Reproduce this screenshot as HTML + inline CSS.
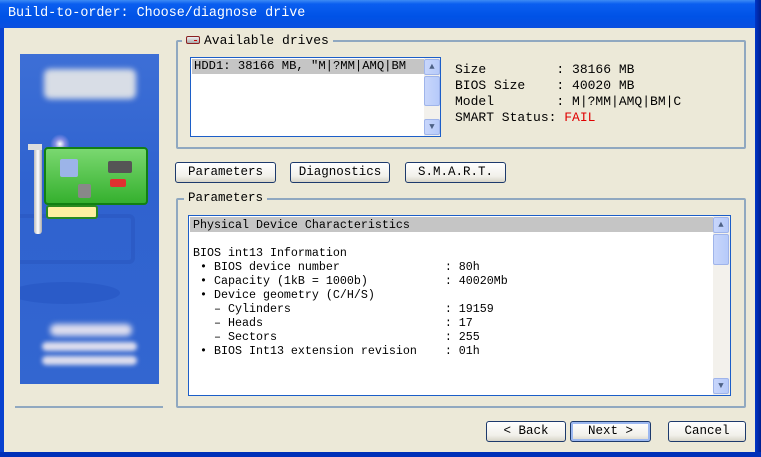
<!DOCTYPE html>
<html><head><style>
*{margin:0;padding:0;box-sizing:border-box}
body{width:761px;height:457px;overflow:hidden;background:#0842d0;font-family:"Liberation Mono",monospace;font-size:11.67px;position:relative}
.a{position:absolute}
.title{left:0;top:0;width:761px;height:28px;background:linear-gradient(#3d8bf5 0,#0a5ef0 4px,#0052e6 60%,#0a4fe0);}
.title span{position:absolute;left:8px;top:6px;color:#fff;font-size:13.4px}
.client{left:4px;top:28px;width:751px;height:424px;background:#ece9d8}
.rb{left:755px;top:0;width:6px;height:457px;background:linear-gradient(90deg,#0036c8,#001e8f)}
.bb{left:0;top:452px;width:761px;height:5px;background:#0030b8}
.grp{border:2px solid #90a8c0;border-radius:2px}
.lbl{background:#ece9d8;padding:0 4px;line-height:14px}
.list{background:#fff;border:1px solid #1c5ec8}
.sel{background:#c5c5c5}
.btn{border:1px solid #1d3a6c;border-radius:3px;background:linear-gradient(#fff,#f1f0ea 70%,#d8d5c8);text-align:center;line-height:18px;font-size:12px}
.sb{background:#f3f1ec}
.sbb{background:linear-gradient(90deg,#c8d6fb,#b6cafa);border:1px solid #9fb4ea;border-radius:2px}
pre{font-family:"Liberation Mono",monospace;font-size:11.67px;line-height:14px}
</style></head><body>
<div class="a title"><span>Build-to-order: Choose/diagnose drive</span></div>
<div class="a client"></div>
<div class="a rb"></div><div class="a bb"></div>

<!-- image panel -->
<div class="a" style="left:20px;top:54px;width:139px;height:330px;background:linear-gradient(180deg,#3d6fd6,#2f62cf 40%,#3366d0);overflow:hidden">
 <div class="a" style="left:24px;top:15px;width:92px;height:30px;background:#d8dde6;border-radius:6px;filter:blur(3px)"></div>
 <div class="a" style="left:-10px;top:160px;width:125px;height:50px;border:4px solid #2a56c0;border-radius:6px;opacity:.6"></div>
 <div class="a" style="left:-10px;top:228px;width:110px;height:22px;border-radius:50%;background:#2857c4;opacity:.7"></div>
 <div class="a" style="left:26px;top:151px;width:52px;height:14px;background:#fff0a0;border:2px solid #2a8a20;border-radius:3px"></div>
 <div class="a" style="left:14px;top:92px;width:8px;height:88px;background:linear-gradient(90deg,#bbb,#fff,#aaa);border-radius:3px"></div>
 <div class="a" style="left:8px;top:90px;width:14px;height:6px;background:#ddd"></div>
 <div class="a" style="left:30px;top:80px;width:20px;height:20px;border-radius:50%;background:radial-gradient(#fff,rgba(255,200,255,.4),transparent 70%)"></div>
 <div class="a" style="left:24px;top:93px;width:104px;height:58px;background:linear-gradient(#7ad870,#35b02e);border:2px solid #128012;border-radius:4px"></div>
 <div class="a" style="left:40px;top:105px;width:18px;height:18px;background:#9cb4e8;border-radius:2px"></div>
 <div class="a" style="left:88px;top:107px;width:24px;height:12px;background:#555;border-radius:2px"></div>
 <div class="a" style="left:90px;top:125px;width:16px;height:8px;background:#e03030;border-radius:2px"></div>
 <div class="a" style="left:58px;top:130px;width:13px;height:14px;background:#888;border-radius:2px"></div>
 <div class="a" style="left:30px;top:270px;width:82px;height:12px;background:#dde;border-radius:6px;filter:blur(3px)"></div>
 <div class="a" style="left:22px;top:288px;width:95px;height:9px;background:#dde;border-radius:6px;filter:blur(2px)"></div>
 <div class="a" style="left:22px;top:302px;width:95px;height:9px;background:#dde;border-radius:6px;filter:blur(2px)"></div>
</div>
<div class="a" style="left:15px;top:406px;width:148px;height:2px;background:#90a8c0"></div>

<!-- group 1 -->
<div class="a grp" style="left:176px;top:40px;width:570px;height:109px"></div>
<div class="a lbl" style="left:182px;top:34px;padding-left:4px;font-size:13px"><span style="display:inline-block;width:14px;height:8px;background:linear-gradient(#eee,#aaa);border:1px solid #8a2020;border-radius:2px;vertical-align:0px;margin-right:4px;position:relative"><span style="position:absolute;left:7px;top:3px;width:3px;height:1px;background:#c00"></span></span>Available drives</div>
<div class="a list" style="left:190px;top:57px;width:251px;height:80px">
 <div class="sel" style="position:absolute;left:1px;top:1px;width:232px;height:15px;overflow:hidden"><pre style="padding-left:2px;line-height:15px;font-size:12.2px">HDD1: 38166 MB, "M|?MM|AMQ|BM</pre></div>
 <div class="sb a" style="left:233px;top:0;width:16px;height:78px">
  <div class="sbb a" style="left:0;top:1px;width:16px;height:16px;text-align:center;font-size:9px;line-height:14px;color:#4d6185">▲</div>
  <div class="sbb a" style="left:0;top:18px;width:16px;height:30px"></div>
  <div class="sbb a" style="left:0;top:61px;width:16px;height:16px;text-align:center;font-size:9px;line-height:14px;color:#4d6185">▼</div>
 </div>
</div>
<pre class="a" style="left:455px;top:62px;line-height:16px;font-size:13px">Size         : 38166 MB
BIOS Size    : 40020 MB
Model        : M|?MM|AMQ|BM|C
SMART Status: <span style="color:#e00000">FAIL</span></pre>

<div class="a btn" style="left:175px;top:162px;width:101px;height:21px;font-size:12.5px">Parameters</div>
<div class="a btn" style="left:290px;top:162px;width:100px;height:21px;font-size:12.5px">Diagnostics</div>
<div class="a btn" style="left:405px;top:162px;width:101px;height:21px;font-size:12.5px">S.M.A.R.T.</div>

<!-- group 2 -->
<div class="a grp" style="left:176px;top:198px;width:570px;height:210px"></div>
<div class="a lbl" style="left:184px;top:191px;font-size:12.5px">Parameters</div>
<div class="a list" style="left:188px;top:215px;width:543px;height:181px">
 <div class="sel a" style="left:1px;top:1px;width:523px;height:15px"></div>
 <pre class="a" style="left:4px;top:2px">Physical Device Characteristics

BIOS int13 Information
 • BIOS device number               : 80h
 • Capacity (1kB = 1000b)           : 40020Mb
 • Device geometry (C/H/S)
   – Cylinders                      : 19159
   – Heads                          : 17
   – Sectors                        : 255
 • BIOS Int13 extension revision    : 01h</pre>
 <div class="sb a" style="left:524px;top:0;width:17px;height:179px">
  <div class="sbb a" style="left:0;top:1px;width:16px;height:16px;text-align:center;font-size:9px;line-height:14px;color:#4d6185">▲</div>
  <div class="sbb a" style="left:0;top:18px;width:16px;height:31px"></div>
  <div class="sbb a" style="left:0;top:162px;width:16px;height:16px;text-align:center;font-size:9px;line-height:14px;color:#4d6185">▼</div>
 </div>
</div>

<div class="a btn" style="left:486px;top:421px;width:80px;height:21px;font-size:12.5px">&lt; Back</div>
<div class="a btn" style="left:570px;top:421px;width:81px;height:21px;box-shadow:inset 0 0 0 2px #9cb8f0;font-size:12.5px">Next &gt;</div>
<div class="a btn" style="left:668px;top:421px;width:78px;height:21px;font-size:12.5px">Cancel</div>
</body></html>
